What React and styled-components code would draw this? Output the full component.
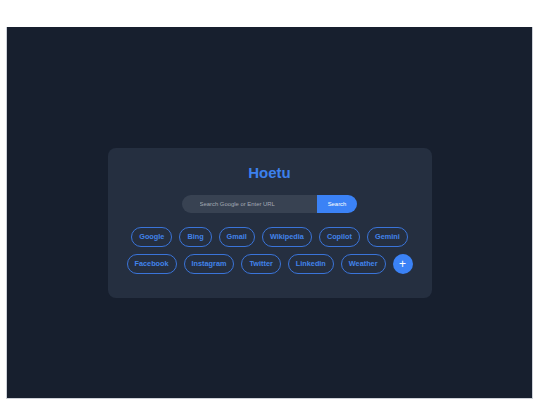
import React from 'react'
import styled, { createGlobalStyle } from 'styled-components'

const GlobalStyle = createGlobalStyle`
  html, body {
    margin: 0;
    padding: 0;
    background: #ffffff;
  }
  * {
    box-sizing: border-box;
  }
`

const links = [
  'Google', 'Bing', 'Gmail', 'Wikipedia', 'Copilot', 'Gemini',
  'Facebook', 'Instagram', 'Twitter', 'Linkedin', 'Weather',
]

function App() {
  return (
    <>
      <GlobalStyle />
      <Page>
        <Screen>
          <Card>
            <Title>Hoetu</Title>
            <SearchForm onSubmit={(e) => e.preventDefault()}>
              <SearchInput type="text" placeholder="Search Google or Enter URL" />
              <SearchButton type="submit">Search</SearchButton>
            </SearchForm>
            <Links>
              {links.map((name) => (
                <Chip key={name} href="#">{name}</Chip>
              ))}
              <AddButton type="button">+</AddButton>
            </Links>
          </Card>
        </Screen>
      </Page>
    </>
  )
}

export default App

const Page = styled.div`
  width: 540px;
  height: 405px;
  padding: 27px 7px 6px 6px;
  display: flex;
  background: #ffffff;
`

const Screen = styled.div`
  flex: 1;
  display: flex;
  align-items: center;
  justify-content: center;
  padding-top: 21px;
  background: #171f2e;
  border: 1px solid #cdd1d8;
  border-top: 0;
  font-family: "Liberation Sans", Arial, sans-serif;
`

const Card = styled.div`
  width: 324px;
  height: 150px;
  padding: 16px 12px 24px;
  display: flex;
  flex-direction: column;
  align-items: center;
  background: #252f40;
  border-radius: 8px;
`

const Title = styled.h1`
  margin: 0 0 13px;
  font-size: 15px;
  line-height: 18px;
  font-weight: 700;
  color: #3c80ec;
`

const SearchForm = styled.form`
  display: flex;
  width: 175px;
  height: 19px;
  margin: 0 0 14px;
`

const SearchInput = styled.input`
  width: 135px;
  height: 100%;
  padding: 0 0 0 17.5px;
  border: 0;
  outline: none;
  border-radius: 10px 0 0 10px;
  background: #384252;
  font-family: "Liberation Sans", Arial, sans-serif;
  font-size: 5.9px;
  color: #e5e7eb;

  &::placeholder {
    color: #a3a9b3;
  }
`

const SearchButton = styled.button`
  flex: 1;
  height: 100%;
  padding: 0;
  border: 0;
  border-radius: 0 10px 10px 0;
  background: #3b82f6;
  font-family: "Liberation Sans", Arial, sans-serif;
  font-size: 5.9px;
  color: #ffffff;
`

const Links = styled.div`
  width: 100%;
  display: flex;
  flex-wrap: wrap;
  justify-content: center;
  column-gap: 7px;
  row-gap: 7.5px;
`

const Chip = styled.a`
  display: inline-flex;
  align-items: center;
  height: 19.5px;
  padding: 0 7px;
  border: 1px solid #3a74d9;
  border-radius: 10px;
  font-size: 7.3px;
  font-weight: 700;
  color: #4283ea;
  text-decoration: none;
`

const AddButton = styled.button`
  width: 20px;
  height: 20px;
  padding: 0 0 1px;
  display: flex;
  align-items: center;
  justify-content: center;
  border: 0;
  border-radius: 50%;
  background: #3b82f6;
  font-family: "Liberation Sans", Arial, sans-serif;
  font-size: 12px;
  line-height: 1;
  color: #ffffff;
`
